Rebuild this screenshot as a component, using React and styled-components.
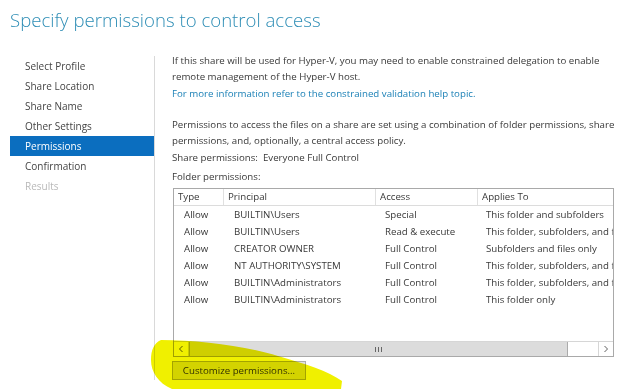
import styled, { createGlobalStyle } from 'styled-components'

const GlobalStyle = createGlobalStyle`
  html, body {
    margin: 0;
    padding: 0;
    background: #ffffff;
  }
  body {
    font-family: 'Open Sans', 'Noto Sans', sans-serif;
    font-size: 9.7px;
    color: #383838;
  }
`;

const Page = styled.div`
  position: relative;
  width: 624px;
  height: 389px;
  overflow: hidden;
  background: #ffffff;
`;

const Title = styled.h1`
  margin: 0;
  padding: 7px 0 0 10px;
  height: 46px;
  box-sizing: border-box;
  font-family: 'Open Sans', sans-serif;
  font-weight: 300;
  font-size: 18.6px;
  color: #2d8db5;
`;

const Body = styled.div`
  display: flex;
  height: 327px;
  padding-top: 7px;
`;

const Nav = styled.ul`
  list-style: none;
  margin: 3px 0 0 10px;
  padding: 0;
  width: 144px;
  border-right: 1px solid #d9d9d9;
`;

const NavItem = styled.li`
  height: 20px;
  line-height: 20px;
  padding-left: 15px;
  font-size: 10px;
  color: ${(p) => (p.$active ? '#ffffff' : p.$disabled ? '#b9b9b9' : '#444444')};
  background: ${(p) => (p.$active ? '#0b6ebf' : 'transparent')};
`;

const Main = styled.div`
  flex: 1;
  padding: 0 4px 0 17px;
  line-height: 16px;
`;

const Para = styled.p`
  margin: 0 0 ${(p) => p.$gap || 0}px 0;
`;

const Link = styled.a`
  display: block;
  color: #1b80b6;
  text-decoration: none;
  margin: 1px 0 15px;
`;

const Table = styled.div`
  margin-left: 1px;
  margin-top: 3px;
  width: 441px;
  height: 169px;
  border: 1px solid #a9a9a9;
  box-sizing: border-box;
  display: flex;
  flex-direction: column;
  overflow: hidden;
`;

const Row = styled.div`
  display: grid;
  grid-template-columns: 50px 152px 102px 220px;
  height: ${(p) => (p.$head ? 16 : 17)}px;
  line-height: ${(p) => (p.$head ? 16 : 17)}px;
  white-space: nowrap;
  border-bottom: ${(p) => (p.$head ? '1px solid #dcdcdc' : 'none')};
`;

const Cell = styled.div`
  overflow: hidden;
  padding-left: ${(p) => (p.$head ? 4 : p.$pad || 9)}px;
  border-right: ${(p) => (p.$head ? '1px solid #e0e0e0' : 'none')};
`;

const Rows = styled.div`
  flex: 1;
`;

const ScrollBar = styled.div`
  display: flex;
  height: 14px;
  border-top: 1px solid #d6d6d6;
  background: #ffffff;
`;

const ArrowBtn = styled.div`
  width: 14px;
  display: flex;
  align-items: center;
  justify-content: center;
  border-${(p) => (p.$side === 'left' ? 'right' : 'left')}: 1px solid #d6d6d6;
`;

const Thumb = styled.div`
  width: 377px;
  background: #dcdcdc;
  border: 1px solid #ababab;
  border-top: none;
  border-bottom: none;
  display: flex;
  align-items: center;
  justify-content: center;
`;

const Grip = styled.div`
  width: 5px;
  height: 5px;
  border-left: 1px solid #666;
  border-right: 1px solid #666;
  position: relative;
  &::after {
    content: '';
    position: absolute;
    left: 2px;
    top: 0;
    width: 1px;
    height: 5px;
    background: #666;
  }
`;

const Track = styled.div`
  flex: 1;
`;

const Button = styled.button`
  display: block;
  margin-top: 4px;
  width: 134px;
  height: 19px;
  padding: 0;
  border: 1px solid #adadad;
  background: #e1e1e1;
  font-family: 'Open Sans', sans-serif;
  font-size: 9.7px;
  color: #333333;
`;

const Highlighter = styled.svg`
  position: absolute;
  left: 0;
  top: 0;
  pointer-events: none;
  mix-blend-mode: multiply;
`;

const Chevron = ({ dir }) => (
  <svg width="6" height="8" viewBox="0 0 6 8">
    <path
      d={dir === 'left' ? 'M4.5 1 L1.5 4 L4.5 7' : 'M1.5 1 L4.5 4 L1.5 7'}
      fill="none"
      stroke="#606060"
      strokeWidth="1"
    />
  </svg>
)

const navItems = [
  'Select Profile',
  'Share Location',
  'Share Name',
  'Other Settings',
  'Permissions',
  'Confirmation',
  'Results',
]

const rows = [
  ['Allow', 'BUILTIN\\Users', 'Special', 'This folder and subfolders'],
  ['Allow', 'BUILTIN\\Users', 'Read & execute', 'This folder, subfolders, and files'],
  ['Allow', 'CREATOR OWNER', 'Full Control', 'Subfolders and files only'],
  ['Allow', 'NT AUTHORITY\\SYSTEM', 'Full Control', 'This folder, subfolders, and files'],
  ['Allow', 'BUILTIN\\Administrators', 'Full Control', 'This folder, subfolders, and files'],
  ['Allow', 'BUILTIN\\Administrators', 'Full Control', 'This folder only'],
]

const pads = [10, 10, 9, 8]

const App = () => {
  return (
    <Page>
      <GlobalStyle />
      <Title>Specify permissions to control access</Title>
      <Body>
        <Nav>
          {navItems.map((item) => (
            <NavItem
              key={item}
              $active={item === 'Permissions'}
              $disabled={item === 'Results'}
            >
              {item}
            </NavItem>
          ))}
        </Nav>
        <Main>
          <Para>
            If this share will be used for Hyper-V, you may need to enable constrained delegation to enable
            remote management of the Hyper-V host.
          </Para>
          <Link>For more information refer to the constrained validation help topic.</Link>
          <Para $gap={1}>
            Permissions to access the files on a share are set using a combination of folder permissions, share
            permissions, and, optionally, a central access policy.
          </Para>
          <Para $gap={3}>Share permissions: &nbsp;Everyone Full Control</Para>
          <Para>Folder permissions:</Para>
          <Table>
            <Row $head>
              <Cell $head>Type</Cell>
              <Cell $head>Principal</Cell>
              <Cell $head>Access</Cell>
              <Cell $head>Applies To</Cell>
            </Row>
            <Rows>
              {rows.map((r, i) => (
                <Row key={i}>
                  {r.map((c, j) => (
                    <Cell key={j} $pad={pads[j]}>{c}</Cell>
                  ))}
                </Row>
              ))}
            </Rows>
            <ScrollBar>
              <ArrowBtn $side="left"><Chevron dir="left" /></ArrowBtn>
              <Thumb><Grip /></Thumb>
              <Track />
              <ArrowBtn $side="right"><Chevron dir="right" /></ArrowBtn>
            </ScrollBar>
          </Table>
          <Button>Customize permissions...</Button>
        </Main>
      </Body>
      <Highlighter width="624" height="389" viewBox="0 0 624 389">
        <path
          d="M161 340 C 200 340, 245 346, 278 356 C 306 364, 328 371, 342 381 L 341 389 L 172 389 C 158 383, 151 372, 151 360 C 151 350, 154 343, 161 340 Z"
          fill="#f0f000"
        />
      </Highlighter>
    </Page>
  )
}

export default App
